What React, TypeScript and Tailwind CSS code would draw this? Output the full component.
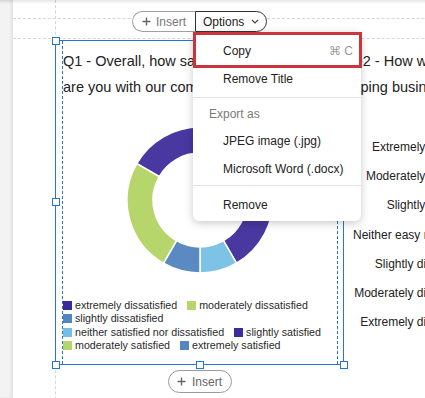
import React from 'react';

const CX = 73;
const R_OUT = 73;
const R_IN = 47;

const pt = (r: number, a: number) => {
  const rad = (a * Math.PI) / 180;
  return [CX + r * Math.sin(rad), CX - r * Math.cos(rad)];
};

const sector = (a1: number, a2: number) => {
  const [x1, y1] = pt(R_OUT, a1);
  const [x2, y2] = pt(R_OUT, a2);
  const [x3, y3] = pt(R_IN, a2);
  const [x4, y4] = pt(R_IN, a1);
  const large = a2 - a1 > 180 ? 1 : 0;
  return `M${x1} ${y1} A${R_OUT} ${R_OUT} 0 ${large} 1 ${x2} ${y2} L${x3} ${y3} A${R_IN} ${R_IN} 0 ${large} 0 ${x4} ${y4} Z`;
};

const segments = [
  { from: 0, to: 35, color: '#5b8ac2' },
  { from: 35, to: 85, color: '#b6d56b' },
  { from: 85, to: 150, color: '#4838a0' },
  { from: 150, to: 180, color: '#7dc3e5' },
  { from: 180, to: 210, color: '#5b8ac2' },
  { from: 210, to: 300, color: '#b6d56b' },
  { from: 300, to: 360, color: '#4838a0' },
];

// legend rows as the chart lays them out
const legendRows = [
  [
    { label: 'extremely dissatisfied', color: 'bg-[#3a2c9b]' },
    { label: 'moderately dissatisfied', color: 'bg-[#b6d56b]' },
  ],
  [{ label: 'slightly dissatisfied', color: 'bg-[#5486c1]' }],
  [
    { label: 'neither satisfied nor dissatisfied', color: 'bg-[#75bfe4]' },
    { label: 'slightly satisfied', color: 'bg-[#3a2c9b]' },
  ],
  [
    { label: 'moderately satisfied', color: 'bg-[#b6d56b]' },
    { label: 'extremely satisfied', color: 'bg-[#5486c1]' },
  ],
];

const scale = [
  'Extremely easy',
  'Moderately easy',
  'Slightly easy',
  'Neither easy nor difficult',
  'Slightly difficult',
  'Moderately difficult',
  'Extremely difficult',
];

const Plus = () => (
  <svg width="9" height="9" viewBox="0 0 9 9" className="shrink-0">
    <path d="M4.5 0.5v8M0.5 4.5h8" stroke="#666" strokeWidth="1.4" />
  </svg>
);

const Handle = ({ className }: { className: string }) => (
  <div className={`absolute h-[8px] w-[8px] border-[1.5px] border-[#2776c9] bg-white ${className}`} />
);

const App: React.FC = () => {
  return (
    <div className="relative flex h-[398px] w-[425px] overflow-hidden bg-white font-['Liberation_Sans','DejaVu_Sans',sans-serif] text-[#222]">
      <div className="w-[13px] shrink-0 bg-[#f3f3f3] shadow-[inset_-2px_0_3px_rgba(0,0,0,0.07)]" />

      <div className="relative flex-1">
        <div className="h-[19px] border-b border-dashed border-[#d6d6d6]" />
        <div className="h-[20px] border-b border-dashed border-[#d6d6d6]" />

        <div className="absolute left-[42px] top-0 h-[40px] border-l border-dashed border-[#d6d6d6]" />
        <div className="absolute left-[42px] top-[365px] h-[40px] border-l border-dashed border-[#d6d6d6]" />

        <div className="mt-[1px] flex pl-[42px]">
          <div className="flex w-[289px] shrink-0 flex-col">
            <div className="relative h-[325px] border border-[#2776c9]">
              <div className="ml-[6px] mr-[5px] h-full border-x border-dashed border-[#2776c9]">
                <div className="pt-[7px] text-[14.5px] leading-[26px] whitespace-nowrap">
                  <div>Q1 - Overall, how satisfied or dissatisfied</div>
                  <div>are you with our company?</div>
                </div>
                <svg width="146" height="146" viewBox="0 0 146 146" className="mx-auto mt-[27px] block">
                  {segments.map((s) => (
                    <path key={s.from} d={sector(s.from, s.to)} fill={s.color} stroke="#fff" strokeWidth="1.5" />
                  ))}
                </svg>
                <div className="mt-[25.5px] text-[10.7px] leading-[13.5px] text-[#2a2a2a]">
                  {legendRows.map((row, i) => (
                    <div key={i} className="flex gap-x-[10px]">
                      {row.map((l) => (
                        <div key={l.label} className="flex items-center gap-[3px] whitespace-nowrap">
                          <span className={`h-[9px] w-[9px] ${l.color}`} />
                          {l.label}
                        </div>
                      ))}
                    </div>
                  ))}
                </div>
              </div>
              <Handle className="-left-[4.5px] -top-[4.5px]" />
              <Handle className="-left-[4.5px] top-[157px]" />
              <Handle className="-bottom-[4.5px] -left-[4.5px]" />
              <Handle className="-bottom-[4.5px] left-[140px]" />
              <Handle className="-bottom-[4.5px] -right-[4.5px]" />
            </div>
            <div className="mt-[5px] flex justify-center">
              <div className="flex h-[23px] w-[64px] items-center justify-center gap-[6px] rounded-full border border-[#9a9a9a] bg-white text-[12px] text-[#666]">
                <Plus />
                Insert
              </div>
            </div>
          </div>

          <div className="w-[200px] shrink-0 pt-[8px]">
            <div className="text-[14.5px] leading-[26px] whitespace-nowrap">
              <div className="pl-[7.5px]">Q2 - How was your experience</div>
              <div className="pl-[16.5px]">ping business with us?</div>
            </div>
            <div className="ml-[9px] mt-[33px] w-[101px] text-right text-[12px] text-[#222]">
              {scale.map((s) => (
                <div key={s} className="h-[29.2px] truncate leading-[29.2px]">
                  {s}
                </div>
              ))}
            </div>
          </div>
        </div>

        <div className="absolute left-[119px] top-[11px] flex h-[21px] text-[12px]">
          <div className="flex w-[63px] items-center justify-center gap-[5px] rounded-l-full border border-r-0 border-[#a0a0a0] bg-white text-[#777]">
            <Plus />
            Insert
          </div>
          <div className="flex w-[72px] items-center gap-[7px] rounded-r-full border border-[#333] bg-white pl-[7px] text-[#222]">
            Options
            <svg width="8" height="5" viewBox="0 0 8 5">
              <path d="M1 1l3 3 3-3" fill="none" stroke="#444" strokeWidth="1.2" />
            </svg>
          </div>
        </div>

        <div className="absolute left-[180px] top-[32px] w-[168px] rounded-b-md rounded-t-sm bg-white pb-[2px] pt-[5px] text-[12px] text-[#222] shadow-[0_2px_8px_rgba(0,0,0,0.22)]">
          <div className="flex h-[28px] items-center justify-between pl-[30px] pr-[8px]">
            Copy
            <span className="text-[#9a9a9a]">⌘ C</span>
          </div>
          <div className="flex h-[28px] items-center pl-[30px]">Remove Title</div>
          <div className="mt-[4px] border-t border-[#e2e2e2]" />
          <div className="mt-[3px] flex h-[26px] items-center pl-[16px] text-[#7a7a7a]">Export as</div>
          <div className="flex h-[28px] items-center pl-[30px]">JPEG image (.jpg)</div>
          <div className="flex h-[28px] items-center pl-[30px]">Microsoft Word (.docx)</div>
          <div className="mt-[2px] border-t border-[#e2e2e2]" />
          <div className="mt-[5px] flex h-[28px] items-center pl-[30px]">Remove</div>
          <div className="absolute -right-[1px] left-0 top-0 h-[36px] border-[3px] border-[#c9353e]" />
        </div>
      </div>

      <div className="pointer-events-none absolute inset-x-0 top-0 h-[4px] bg-gradient-to-b from-black/10 to-transparent" />
    </div>
  );
};

export default App;
